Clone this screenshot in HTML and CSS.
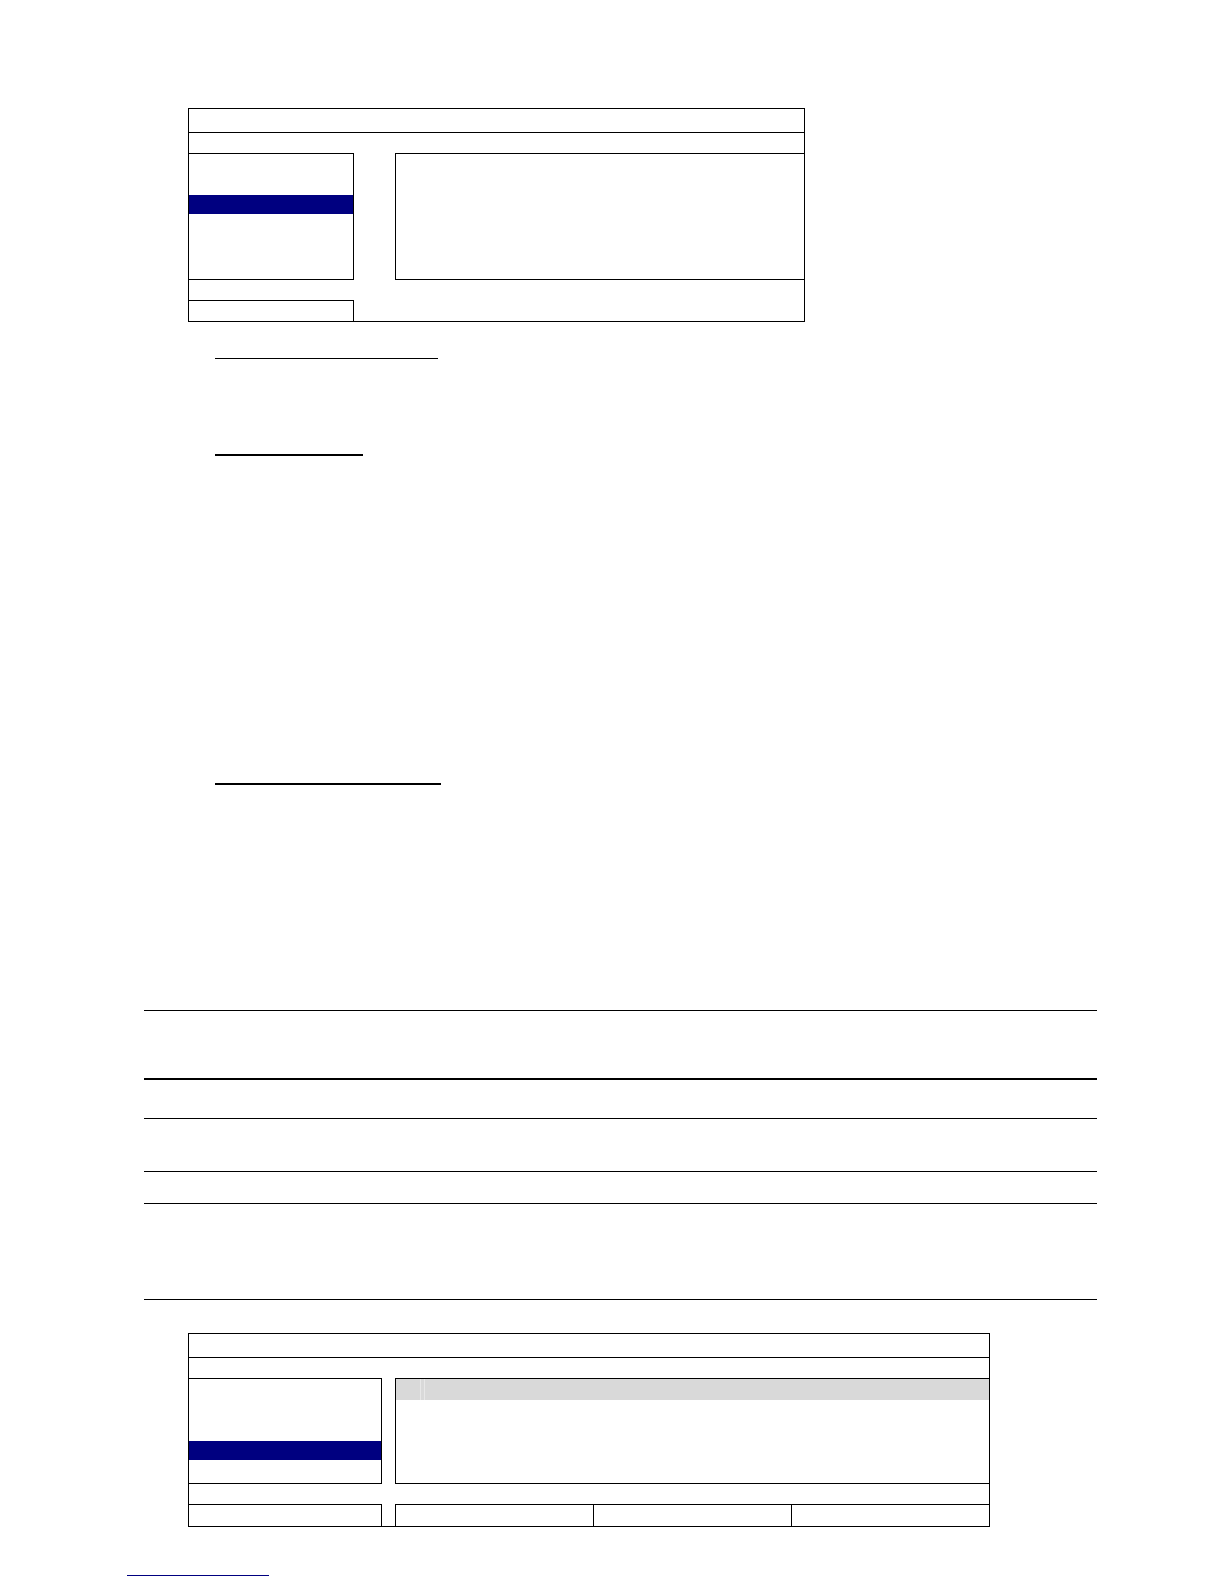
FILE: index.html
```
<!DOCTYPE html>
<html lang="en">
<head>
    <meta charset="UTF-8">
    <meta name="viewport" content="width=device-width, initial-scale=1.0">
    <title>Menu Layout</title>
    <link rel="stylesheet" href="styles.css">
</head>
<body>
    <main class="page">
        <!-- First menu screen -->
        <div class="screen screen-small">
            <div class="screen-title"></div>
            <div class="screen-body">
                <ul class="menu">
                    <li class="selected"></li>
                </ul>
                <div class="panel"></div>
            </div>
            <div class="screen-footer">
                <div class="footer-left"></div>
            </div>
        </div>

        <!-- Underlined sections -->
        <section class="topic topic-short">
            <div class="underline"></div>
        </section>
        <section class="topic topic-long">
            <div class="underline thick"></div>
        </section>
        <section class="topic topic-medium">
            <div class="underline thick"></div>
        </section>

        <!-- Ruled rows -->
        <div class="rows">
            <div class="row row-intro"></div>
            <div class="row row-head"></div>
            <div class="row row-double"></div>
            <div class="row row-single"></div>
            <div class="row row-tall"></div>
        </div>

        <!-- Second menu screen -->
        <div class="screen screen-large">
            <div class="screen-title"></div>
            <div class="screen-body">
                <ul class="menu">
                    <li class="selected"></li>
                </ul>
                <div class="panel">
                    <div class="panel-head"><span class="column-mark"></span></div>
                </div>
            </div>
            <div class="screen-footer">
                <div class="footer-left"></div>
                <div class="footer-cells">
                    <div class="cell"></div>
                    <div class="cell"></div>
                    <div class="cell"></div>
                </div>
            </div>
        </div>
    </main>

    <footer class="page-footer">
        <a class="footer-link" href="#" aria-label="Back to top"></a>
    </footer>
</body>
</html>
```
FILE: styles.css
```
* {
    box-sizing: border-box;
}

body {
    margin: 0;
    font-family: "Liberation Sans", Arial, sans-serif;
    background-color: #fff;
    color: #000;
}

.page {
    padding: 108px 127px 0 144px;
}

/* Menu screens */
.screen {
    display: flex;
    flex-direction: column;
    margin-left: 44px;
    border: 1px solid #000;
}

.screen-small {
    max-width: 617px;
    margin-bottom: 36px;
}

.screen-large {
    max-width: 802px;
    margin-top: 33px;
}

.screen-title {
    height: 24px;
    border-bottom: 1px solid #000;
}

.screen-body {
    display: flex;
    gap: 41px;
    min-height: 127px;
    margin: 20px 0;
}

.screen-large .screen-body {
    gap: 13px;
    min-height: 106px;
}

.menu {
    width: 165px;
    margin: 0;
    padding: 41px 0 0;
    list-style: none;
    border: 1px solid #000;
    border-left: none;
}

.screen-large .menu {
    width: 193px;
    padding-top: 62px;
}

.selected {
    height: 19px;
    background-color: #000080;
}

.panel {
    flex: 1;
    border: 1px solid #000;
    border-right: none;
}

.panel-head {
    height: 21px;
    padding-left: 24px;
    background-color: #d9d9d9;
}

.column-mark {
    display: block;
    width: 5px;
    height: 100%;
    border: 1px solid #e8e8e8;
    border-width: 0 1px;
}

.screen-footer {
    display: flex;
    gap: 13px;
    height: 21px;
}

.screen-large .screen-footer {
    height: 22px;
}

.footer-left {
    width: 165px;
    border-top: 1px solid #000;
    border-right: 1px solid #000;
}

.screen-large .footer-left {
    width: 193px;
}

.footer-cells {
    display: flex;
    flex: 1;
}

.cell {
    flex: 1;
    border-top: 1px solid #000;
    border-left: 1px solid #000;
}

/* Underlined sections */
.topic {
    margin-left: 71px;
}

.underline {
    width: 223px;
    height: 1px;
    background-color: #000;
}

.thick {
    height: 2px;
}

.topic-short {
    min-height: 96px;
}

.topic-long {
    min-height: 329px;
}

.topic-long .underline {
    width: 148px;
}

.topic-medium {
    min-height: 227px;
}

.topic-medium .underline {
    width: 226px;
}

/* Ruled rows */
.rows {
    border-top: 1px solid #000;
}

.row {
    border-bottom: 1px solid #000;
}

.row-intro {
    height: 69px;
    border-bottom-width: 2px;
}

.row-head {
    height: 39px;
}

.row-double {
    height: 53px;
}

.row-single {
    height: 32px;
}

.row-tall {
    height: 96px;
}

/* Page footer */
.page-footer {
    padding: 48px 127px 8px;
}

.footer-link {
    display: block;
    width: 142px;
    border-bottom: 1px solid #000080;
}
```
